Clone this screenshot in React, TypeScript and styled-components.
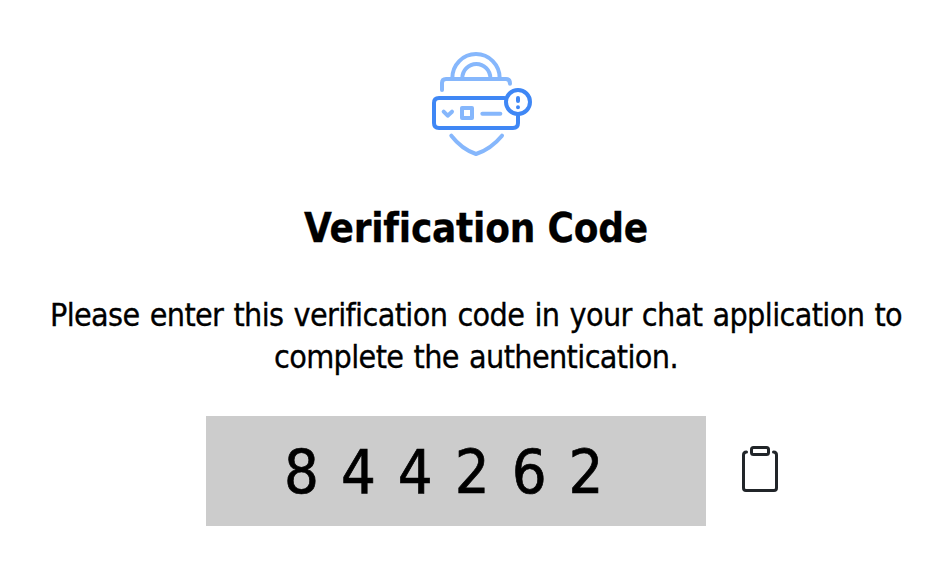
import React from "react";
import styled, { createGlobalStyle } from "styled-components";

const GlobalStyle = createGlobalStyle`
  body { margin: 0; background: #fff; color: #000; }
  * { box-sizing: border-box; }
`;

const Page = styled.main`
  width: 946px;
  height: 588px;
  padding: 42px 0 0 6px;
  display: flex;
  flex-direction: column;
  align-items: center;
  overflow: hidden;
  font-family: "DejaVu Sans Condensed", "DejaVu Sans", sans-serif;
  font-stretch: condensed;
`;

const ShieldIcon = styled.svg`
  width: 120px;
  height: 124px;
  margin-left: 12px;
  fill: none;
  stroke: #3f87f5;
  stroke-width: 12;
  stroke-linecap: round;
  stroke-linejoin: round;
`;

const Title = styled.h1`
  margin: 38px 0 0;
  font-size: 40px;
  line-height: 48px;
  font-weight: 700;
  letter-spacing: -0.2px;
  -webkit-text-stroke: 0.3px #000;
  white-space: nowrap;
`;

const Message = styled.p`
  margin: 42px 0 0;
  font-size: 32px;
  line-height: 42px;
  letter-spacing: -0.63px;
  word-spacing: 1.6px;
  -webkit-text-stroke: 0.3px #000;
  text-align: center;
  white-space: nowrap;
`;

const CodeRow = styled.div`
  align-self: flex-start;
  display: flex;
  align-items: center;
  gap: 36px;
  margin: 38px 0 0 200px;
`;

const CodeBox = styled.div`
  width: 500px;
  height: 110px;
  padding-left: 78px;
  background: #ccc;
  font-size: 61px;
  line-height: 112px;
  letter-spacing: 22px;
  -webkit-text-stroke: 0.7px #000;
  white-space: nowrap;
`;

const CopyButton = styled.button`
  display: flex;
  padding: 0;
  margin-bottom: 2px;
  border: 0;
  background: none;
`;

const ClipboardIcon = styled.svg`
  width: 36px;
  height: 48px;
  fill: none;
  stroke: #212529;
  stroke-width: 3;
  stroke-linecap: round;
  stroke-linejoin: round;
`;

export default function App() {
  return (
    <>
      <GlobalStyle />
      <Page>
        <ShieldIcon viewBox="0 0 360 372" aria-hidden="true">
          <g stroke="#86b7fc">
            <path d="M60 144V123Q60 111 72 111H252Q264 111 264 125" />
            <path d="M91 108A71 72 0 0 1 233 108" />
            <path d="M121 108A42 42 0 0 1 205 108" />
            <path d="M88 281Q119 321 162 336Q207 321 240 281" />
            <path d="M65 209L77 221L90 209" />
            <path d="M120 198H150V228H120Z" />
            <path d="M181 215H235" />
          </g>
          <path d="M247 168H51Q36 168 36 183V243Q36 258 51 258H273Q288 258 288 243V222" />
          <circle cx="288" cy="180" r="36" />
          <path d="M288 168V177M288 196V196.1" />
        </ShieldIcon>
        <Title>Verification Code</Title>
        <Message>
          Please enter this verification code in your chat application to
          <br />
          complete the authentication.
        </Message>
        <CodeRow>
          <CodeBox>844262</CodeBox>
          <CopyButton aria-label="Copy code">
            <ClipboardIcon viewBox="0 0 36 48">
              <path d="M4.5 6Q1.5 6 1.5 9V42Q1.5 44.5 4 44.5H32Q34.5 44.5 34.5 42V9Q34.5 6 31.5 6" />
              <rect x="9.5" y="1.5" width="17" height="7" rx="2" />
            </ClipboardIcon>
          </CopyButton>
        </CodeRow>
      </Page>
    </>
  );
}
